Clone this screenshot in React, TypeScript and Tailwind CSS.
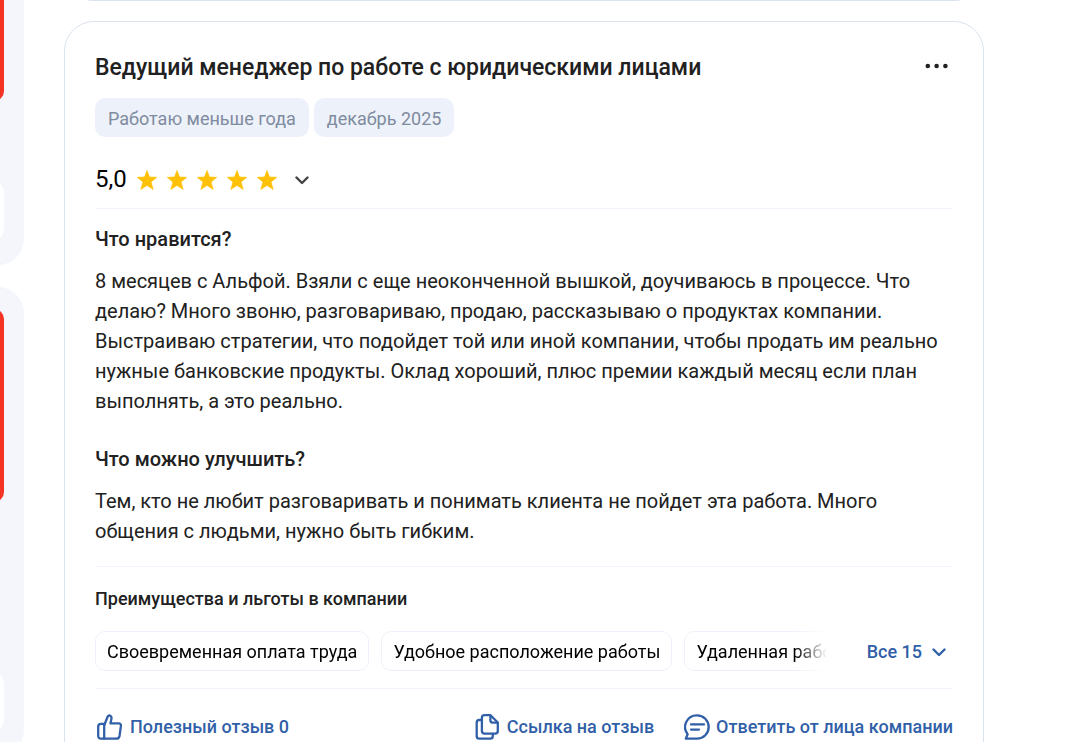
import type { ReactNode } from 'react';

const tags = ['Работаю меньше года', 'декабрь 2025'];
const benefits = ['Своевременная оплата труда', 'Удобное расположение работы', 'Удаленная работа'];

function Star() {
  return (
    <svg className="size-5" viewBox="0 0 20 20" fill="#ffc107" stroke="#ffc107" strokeWidth="0.6" strokeLinejoin="round" aria-hidden="true">
      <path d="M10 0.4 L12.5 7 L19.8 7.3 L14.1 12 L16.2 19.5 L10 15.4 L3.8 19.5 L5.9 12 L0.2 7.3 L7.5 7 Z" />
    </svg>
  );
}

function Chevron({ className }: { className: string }) {
  return (
    <svg className={className} viewBox="0 0 14 14" fill="none" stroke="currentColor" strokeWidth="2.4" strokeLinecap="round" strokeLinejoin="round" aria-hidden="true">
      <path d="M1.5 4.5 L7 10 L12.5 4.5" />
    </svg>
  );
}

function Icon({ children }: { children: ReactNode }) {
  return (
    <svg className="size-[26px] shrink-0" viewBox="0 0 26 26" fill="none" stroke="currentColor" strokeWidth="2.3" strokeLinecap="round" strokeLinejoin="round" aria-hidden="true">
      {children}
    </svg>
  );
}

function Question({ title, children }: { title: string; children: ReactNode }) {
  return (
    <section>
      <h3 className="text-xl leading-[30px] font-medium">{title}</h3>
      <p className="mt-3 text-xl leading-[30px]">{children}</p>
    </section>
  );
}

export default function App() {
  return (
    <div className="flex h-screen gap-10 overflow-hidden bg-white font-['Roboto','Liberation_Sans',sans-serif] text-[#212121]">
      <aside className="flex w-6 shrink-0 flex-col items-end gap-[22px] overflow-hidden">
        <div className="w-80 shrink-0 rounded-b-[26px] bg-[#f4f6fc] px-5 pb-6">
          <div className="h-[101px] rounded-b-[10px] bg-[#f43322]" />
          <div className="mt-20 h-[60px] rounded-[12px] bg-white" />
        </div>
        <div className="w-80 shrink-0 rounded-[26px] bg-[#f4f6fc] px-5 pt-[22px] pb-6">
          <div className="h-[193px] rounded-[10px] bg-[#f43322]" />
          <div className="mt-[170px] h-[60px] rounded-[12px] bg-white" />
        </div>
      </aside>

      <main className="-mt-15 flex max-w-[920px] min-w-0 flex-1 flex-col gap-5">
        <div className="h-[61px] shrink-0 rounded-b-[30px] border border-t-0 border-[#dbe3ec]" />

        <article className="shrink-0 rounded-[30px] border border-[#dbe3ec] p-[30px]">
          <header className="flex items-start justify-between">
            <h2 className="text-[23px] leading-8 font-medium">Ведущий менеджер по работе с юридическими лицами</h2>
            <button type="button" aria-label="Меню" className="flex h-7 items-center px-1">
              <svg className="h-6 w-6" viewBox="0 0 24 24" fill="#212121" aria-hidden="true">
                <circle cx="2.8" cy="12" r="2.3" />
                <circle cx="11.6" cy="12" r="2.3" />
                <circle cx="20.4" cy="12" r="2.3" />
              </svg>
            </button>
          </header>

          <ul className="mt-3.5 flex gap-[5px]">
            {tags.map((t) => (
              <li key={t} className="rounded-[10px] bg-[#edf1f9] px-[13px] pt-[9px] pb-1.5 text-lg leading-6 text-[#7f8b9f]">{t}</li>
            ))}
          </ul>

          <button type="button" aria-label="Оценка 5,0 из 5" className="mt-6 flex h-9 items-center text-2xl text-black">
            <span>5,0</span>
            <span className="flex items-center gap-2.5 pt-0.5 pl-2.5">
              <Star /><Star /><Star /><Star /><Star />
              <Chevron className="ml-2 size-3.5 text-[#444]" />
            </span>
          </button>

          <hr className="mt-[11px] border-[#f0f3f9]" />

          <div className="mt-[15px] flex flex-col gap-7">
            <Question title="Что нравится?">
              8 месяцев с Альфой. Взяли с еще неоконченной вышкой, доучиваюсь в процессе. Что делаю? Много звоню, разговариваю, продаю, рассказываю о продуктах компании. Выстраиваю стратегии, что подойдет той или иной компании, чтобы продать им реально нужные банковские продукты. Оклад хороший, плюс премии каждый месяц если план выполнять, а это реально.
            </Question>
            <Question title="Что можно улучшить?">
              Тем, кто не любит разговаривать и понимать клиента не пойдет эта работа. Много общения с людьми, нужно быть гибким.
            </Question>
          </div>

          <hr className="mt-5 border-[#f0f3f9]" />

          <h3 className="mt-5 text-lg leading-6 font-medium">Преимущества и льготы в компании</h3>
          <div className="mt-5 flex items-center">
            <ul className="flex min-w-0 flex-1 gap-3 overflow-hidden mask-r-from-[calc(100%-32px)] mask-r-to-100%">
              {benefits.map((b) => (
                <li key={b} className="shrink-0 rounded-[10px] border border-[#edf1f9] px-[11px] pt-2 pb-1.5 text-lg leading-6 whitespace-nowrap text-black">{b}</li>
              ))}
            </ul>
            <button type="button" className="ml-10 flex items-center gap-2.5 pt-0.5 pr-[7px] text-lg font-medium text-[#315fa8]">
              Все 15
              <Chevron className="size-3.5" />
            </button>
          </div>

          <hr className="mt-[17px] border-[#f0f3f9]" />

          <footer className="mt-6 flex items-center justify-between text-lg leading-7 font-medium text-[#315fa8]">
            <button type="button" className="flex items-center gap-2 pl-px">
              <Icon>
                <path d="M8.2 11.2 L11.6 2.8 C12 1.4 13.5 1.2 14.5 1.9 C15.7 2.8 15.7 4 15.3 5.4 L14.5 9.3 H22.6 C24.3 9.3 25.2 10.5 24.9 12.1 L23.5 22 C23.2 23.8 22.2 24.7 20.5 24.7 H5 C3.3 24.7 2.2 23.6 2.2 22 V12.8 C2.2 10.8 3.2 9.9 5 9.9 H8.7" />
                <path d="M8.2 11 V24.5" />
              </Icon>
              Полезный отзыв 0
            </button>
            <div className="flex gap-[30px]">
              <button type="button" className="flex items-center gap-1.5">
                <Icon>
                  <path d="M9.5 1.2 H15.5 L22.8 8.5 V17 C22.8 18.6 21.8 19.6 20.2 19.6 H9.5 C7.9 19.6 6.9 18.6 6.9 17 V3.8 C6.9 2.2 7.9 1.2 9.5 1.2 Z" />
                  <path d="M15.4 1.6 V6.2 C15.4 7.8 16.2 8.6 17.8 8.6 H22.4" />
                  <path d="M6.6 6 H4.3 C2.7 6 1.7 7 1.7 8.6 V22 C1.7 23.7 2.7 24.7 4.3 24.7 H15.2 C16.8 24.7 17.8 23.7 17.8 22 V20" />
                </Icon>
                Ссылка на отзыв
              </button>
              <button type="button" className="flex items-center gap-1.5">
                <Icon>
                  <path d="M13 1.3 A11.7 11.7 0 1 1 13 24.7 H1.8 L3.6 20.2 A11.7 11.7 0 0 1 13 1.3 Z" />
                  <path d="M7 10.4 H20 M7 15.6 H15" />
                </Icon>
                Ответить от лица компании
              </button>
            </div>
          </footer>
        </article>
      </main>
    </div>
  );
}
